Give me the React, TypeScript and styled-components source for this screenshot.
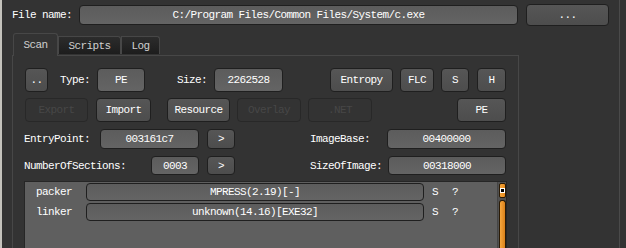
import React from "react";
import styled, { createGlobalStyle, css } from "styled-components";

const Global = createGlobalStyle`
  html, body { margin: 0; padding: 0; background: #333333; }
  body { width: 626px; height: 248px; overflow: hidden; }
  * { box-sizing: border-box; }
`;

const fontCss = css`
  font-family: "Liberation Mono", "DejaVu Sans Mono", monospace;
  font-size: 11px;
  letter-spacing: -0.6px;
  color: #ffffff;
  white-space: pre;
`;

const Window = styled.div`
  position: relative;
  width: 626px;
  height: 248px;
  overflow: hidden;
  background: #333333;
  border-left: 2px solid #c4c2bc;
  ${fontCss}
`;

const Main = styled.div`
  width: 618px;
  height: 248px;
  border-right: 1px solid #4a4a4a;
  padding: 4px 0 0 10px;
  display: flex;
  flex-direction: column;
`;

const FileRow = styled.div`
  display: flex;
  align-items: center;
  height: 22px;
`;

const Label = styled.span<{ $w?: number; $ml?: number }>`
  display: inline-block;
  width: ${(p) => (p.$w ? `${p.$w}px` : "auto")};
  margin-left: ${(p) => p.$ml ?? 0}px;
  line-height: 14px;
`;

const Field = styled.div<{ $w: number; $h?: number; $ml?: number }>`
  width: ${(p) => p.$w}px;
  height: ${(p) => p.$h ?? 19}px;
  margin-left: ${(p) => p.$ml ?? 0}px;
  border: 1px solid #1f1f1f;
  border-radius: 4px;
  background: linear-gradient(#5c5c5c, #646464);
  display: flex;
  align-items: center;
  justify-content: center;
  flex-shrink: 0;
`;

const Button = styled.div<{ $w: number; $h?: number; $ml?: number; $disabled?: boolean }>`
  width: ${(p) => p.$w}px;
  height: ${(p) => p.$h ?? 24}px;
  margin-left: ${(p) => p.$ml ?? 0}px;
  border: 1px solid ${(p) => (p.$disabled ? "#282828" : "#1f1f1f")};
  border-radius: 4px;
  background: ${(p) => (p.$disabled ? "#333333" : "linear-gradient(#565656, #4d4d4d)")};
  color: ${(p) => (p.$disabled ? "#474747" : "#ffffff")};
  display: flex;
  align-items: center;
  justify-content: center;
  flex-shrink: 0;
`;

const TabBar = styled.div`
  display: flex;
  align-items: flex-end;
  height: 29px;
  padding-left: 1px;
`;

const Tab = styled.div<{ $w: number; $active?: boolean }>`
  width: ${(p) => p.$w}px;
  height: ${(p) => (p.$active ? 23 : 18)}px;
  border: 1px solid #474747;
  border-bottom: none;
  border-radius: ${(p) => (p.$active ? "3px 3px 0 0" : "0 3px 0 0")};
  background: ${(p) => (p.$active ? "#333333" : "linear-gradient(#2c2c2c, #1d1d1d)")};
  color: #cfcfcf;
  display: flex;
  align-items: center;
  justify-content: center;
  margin-bottom: ${(p) => (p.$active ? -1 : 1)}px;
  position: relative;
  z-index: ${(p) => (p.$active ? 1 : 0)};
`;

const Panel = styled.div`
  width: 507px;
  flex: 1;
  border: 1px solid #474747;
  border-bottom: none;
  padding: 12px 0 0 12px;
  display: flex;
  flex-direction: column;
`;

const Row = styled.div<{ $h: number; $mt?: number }>`
  display: flex;
  align-items: center;
  height: ${(p) => p.$h}px;
  margin-top: ${(p) => p.$mt ?? 0}px;
`;

const Pair = styled.div<{ $w: number; $ml?: number }>`
  display: flex;
  align-items: center;
  justify-content: space-between;
  width: ${(p) => p.$w}px;
  margin-left: ${(p) => p.$ml ?? 0}px;
`;

const List = styled.div`
  margin-top: 6px;
  margin-left: -1px;
  width: 483px;
  flex: 1;
  border: 1px solid #262626;
  border-bottom: none;
  background: #5f5f5f;
  display: flex;
`;

const ListBody = styled.div`
  flex: 1;
  padding-top: 1px;
  display: flex;
  flex-direction: column;
  gap: 3px;
`;

const ListRow = styled.div`
  display: flex;
  align-items: center;
  height: 17px;
`;

const Flag = styled.span<{ $ml: number }>`
  margin-left: ${(p) => p.$ml}px;
`;

const ScrollTrack = styled.div`
  width: 9px;
  background: #505050;
  border-left: 1px solid #454545;
  display: flex;
  flex-direction: column;
  align-items: center;
  padding-top: 1px;
  gap: 2px;
`;

const ScrollArrow = styled.div`
  width: 7px;
  height: 15px;
  border-radius: 2px;
  border: 1px solid #2a1a05;
  background: linear-gradient(90deg, #f6a53a, #e68a1e);
  display: flex;
  align-items: center;
  justify-content: center;
  &::after {
    content: "";
    width: 3px;
    height: 3px;
    background: #000;
    box-shadow: 0 0 0 1px #fff;
  }
`;

const ScrollThumb = styled.div`
  width: 7px;
  flex: 1;
  border-radius: 3px 3px 0 0;
  border: 1px solid #2a1a05;
  border-bottom: none;
  background: linear-gradient(90deg, #f8a83e, #d9801a);
`;

export default function App() {
  return (
    <>
      <Global />
      <Window>
        <Main>
          <FileRow>
            <Label $w={67}>File name:</Label>
            <Field $w={439} $h={20}>C:/Program Files/Common Files/System/c.exe</Field>
            <Button $w={83} $h={22} $ml={8}>...</Button>
          </FileRow>
          <TabBar>
            <Tab $w={45} $active>Scan</Tab>
            <Tab $w={63}>Scripts</Tab>
            <Tab $w={39}>Log</Tab>
          </TabBar>
          <Panel>
            <Row $h={24}>
              <Button $w={23}>..</Button>
              <Label $w={37} $ml={12}>Type:</Label>
              <Field $w={48} $h={24}>PE</Field>
              <Label $w={37} $ml={32}>Size:</Label>
              <Field $w={69} $h={24}>2262528</Field>
              <Button $w={63} $ml={47}>Entropy</Button>
              <Button $w={34} $ml={7}>FLC</Button>
              <Button $w={28} $ml={7}>S</Button>
              <Button $w={29} $ml={8}>H</Button>
            </Row>
            <Row $h={24} $mt={6}>
              <Button $w={63} $disabled>Export</Button>
              <Button $w={55} $ml={8}>Import</Button>
              <Button $w={63} $ml={16}>Resource</Button>
              <Button $w={64} $ml={7} $disabled>Overlay</Button>
              <Button $w={64} $ml={7} $disabled>.NET</Button>
              <Button $w={49} $ml={85}>PE</Button>
            </Row>
            <Row $h={20} $mt={7}>
              <Pair $w={175} $ml={-1}>
                <Label>EntryPoint:</Label>
                <Field $w={99} $h={20}>003161c7</Field>
              </Pair>
              <Button $w={28} $h={20} $ml={8}>&gt;</Button>
              <Pair $w={196} $ml={75}>
                <Label>ImageBase:</Label>
                <Field $w={119} $h={20}>00400000</Field>
              </Pair>
            </Row>
            <Row $h={19} $mt={7}>
              <Pair $w={175} $ml={-1}>
                <Label>NumberOfSections:</Label>
                <Field $w={48} $h={19}>0003</Field>
              </Pair>
              <Button $w={28} $h={19} $ml={8}>&gt;</Button>
              <Pair $w={196} $ml={75}>
                <Label>SizeOfImage:</Label>
                <Field $w={118} $h={19}>00318000</Field>
              </Pair>
            </Row>
            <List>
              <ListBody>
                <ListRow>
                  <Label $w={50} $ml={11}>packer</Label>
                  <Field $w={338} $h={18}>MPRESS(2.19)[-]</Field>
                  <Flag $ml={8}>S</Flag>
                  <Flag $ml={14}>?</Flag>
                </ListRow>
                <ListRow>
                  <Label $w={50} $ml={11}>linker</Label>
                  <Field $w={338} $h={18}>unknown(14.16)[EXE32]</Field>
                  <Flag $ml={8}>S</Flag>
                  <Flag $ml={14}>?</Flag>
                </ListRow>
              </ListBody>
              <ScrollTrack>
                <ScrollArrow />
                <ScrollThumb />
              </ScrollTrack>
            </List>
          </Panel>
        </Main>
      </Window>
    </>
  );
}
